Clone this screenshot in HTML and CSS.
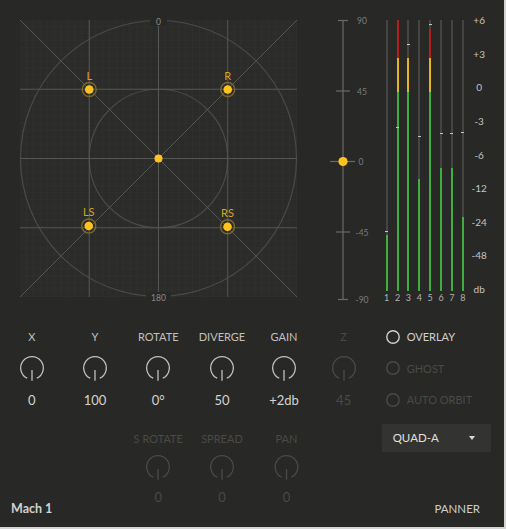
FILE: index.html
```html
<!DOCTYPE html>
<html>
<head>
<meta charset="utf-8">
<link rel="stylesheet" href="styles.css">
</head>
<body>
<div class="panel">
  <div class="top">
    <svg class="panner" width="277" height="277" viewBox="0 0 277 277">
      <defs>
        <pattern id="minor" width="6.925" height="6.925" patternUnits="userSpaceOnUse">
          <path d="M6.925 0V6.925H0" fill="none" stroke="#323230" stroke-width="1"/>
        </pattern>
      </defs>
      <rect width="277" height="277" fill="#2b2b29"/>
      <rect width="277" height="277" fill="url(#minor)"/>
      <g fill="none" stroke="#4a4a48" stroke-width="1.2">
        <circle cx="138.5" cy="138.5" r="138"/>
        <circle cx="138.5" cy="138.5" r="69.25"/>
      </g>
      <g stroke="#555553" stroke-width="1">
        <line x1="0" y1="69.25" x2="277" y2="69.25"/>
        <line x1="0" y1="138.5" x2="277" y2="138.5"/>
        <line x1="0" y1="207.75" x2="277" y2="207.75"/>
        <line x1="69.25" y1="0" x2="69.25" y2="277"/>
        <line x1="138.5" y1="0" x2="138.5" y2="277"/>
        <line x1="207.75" y1="0" x2="207.75" y2="277"/>
        <line x1="0" y1="0" x2="277" y2="277"/>
        <line x1="277" y1="0" x2="0" y2="277"/>
      </g>
      <rect x="130" y="-4" width="17" height="10" fill="#282826"/>
      <text class="deg" x="138.5" y="4.5">0</text>
      <rect x="126" y="272" width="25" height="10" fill="#282826"/>
      <text class="deg" x="138.5" y="280.5">180</text>
      <g class="spk">
        <text x="69.25" y="59.5">L</text>
        <circle class="ring" cx="69.25" cy="69.5" r="7"/>
        <circle class="dot" cx="69.25" cy="69.5" r="4.3"/>
        <text x="207.75" y="59.5">R</text>
        <circle class="ring" cx="207.75" cy="69.5" r="7"/>
        <circle class="dot" cx="207.75" cy="69.5" r="4.3"/>
        <text x="68.75" y="195.5">LS</text>
        <circle class="ring" cx="68.75" cy="206" r="7"/>
        <circle class="dot" cx="68.75" cy="206" r="4.3"/>
        <text x="207.5" y="197">RS</text>
        <circle class="ring" cx="207.5" cy="206.7" r="7"/>
        <circle class="dot" cx="207.5" cy="206.7" r="4.3"/>
        <circle class="dot" cx="138.5" cy="138.5" r="4"/>
      </g>
    </svg>

    <svg class="slider" width="44" height="280" viewBox="0 0 44 280">
      <g stroke="#6a6a68" stroke-width="1.2">
        <line x1="15" y1="0" x2="15" y2="279.5"/>
        <line x1="10" y1="0.5" x2="20" y2="0.5"/>
        <line x1="8" y1="71" x2="22" y2="71"/>
        <line x1="2" y1="141.5" x2="27" y2="141.5"/>
        <line x1="8" y1="212" x2="22" y2="212"/>
        <line x1="10" y1="279.5" x2="20" y2="279.5"/>
      </g>
      <circle cx="15" cy="141.5" r="4.6" fill="#ffc21f"/>
      <g class="sl">
        <text x="34" y="3.5">90</text>
        <text x="34" y="74.5">45</text>
        <text x="33" y="145">0</text>
        <text x="34" y="215.5">-45</text>
        <text x="34" y="282.5">-90</text>
      </g>
    </svg>

    <div class="meters">
      <div class="meter"><div class="bar"><div class="fill" style="height:56px"></div><i class="peak" style="top:211px"></i></div><span>1</span></div>
      <div class="meter"><div class="bar"><div class="fill" style="height:271px"></div><i class="peak" style="top:107px"></i></div><span>2</span></div>
      <div class="meter"><div class="bar"><div class="fill" style="height:233px"></div><i class="peak" style="top:24px"></i></div><span>3</span></div>
      <div class="meter"><div class="bar"><div class="fill" style="height:112px"></div><i class="peak" style="top:116px"></i></div><span>4</span></div>
      <div class="meter"><div class="bar"><div class="fill" style="height:262px"></div><i class="peak" style="top:4px"></i></div><span>5</span></div>
      <div class="meter"><div class="bar"><div class="fill" style="height:123px"></div><i class="peak" style="top:113px"></i></div><span>6</span></div>
      <div class="meter"><div class="bar"><div class="fill" style="height:123px"></div><i class="peak" style="top:113px"></i></div><span>7</span></div>
      <div class="meter"><div class="bar"><div class="fill" style="height:74px"></div><i class="peak" style="top:112px"></i></div><span>8</span></div>
    </div>
    <div class="scale">
      <span>+6</span><span>+3</span><span>0</span><span>-3</span><span>-6</span><span>-12</span><span>-24</span><span>-48</span><span>db</span>
    </div>
  </div>

  <div class="controls">
    <div class="knobs">
      <div class="knob"><span class="label">X</span><svg width="26" height="26" viewBox="0 0 26 26"><path d="M8.2 23.2A11.3 11.3 0 1 1 17.8 23.2"/><line x1="13" y1="15" x2="13" y2="25.7"/></svg><span class="value">0</span></div>
      <div class="knob"><span class="label">Y</span><svg width="26" height="26" viewBox="0 0 26 26"><path d="M8.2 23.2A11.3 11.3 0 1 1 17.8 23.2"/><line x1="13" y1="15" x2="13" y2="25.7"/></svg><span class="value">100</span></div>
      <div class="knob"><span class="label">ROTATE</span><svg width="26" height="26" viewBox="0 0 26 26"><path d="M8.2 23.2A11.3 11.3 0 1 1 17.8 23.2"/><line x1="13" y1="15" x2="13" y2="25.7"/></svg><span class="value">0°</span></div>
      <div class="knob"><span class="label">DIVERGE</span><svg width="26" height="26" viewBox="0 0 26 26"><path d="M8.2 23.2A11.3 11.3 0 1 1 17.8 23.2"/><line x1="13" y1="15" x2="13" y2="25.7"/></svg><span class="value">50</span></div>
      <div class="knob"><span class="label">GAIN</span><svg width="26" height="26" viewBox="0 0 26 26"><path d="M8.2 23.2A11.3 11.3 0 1 1 17.8 23.2"/><line x1="13" y1="15" x2="13" y2="25.7"/></svg><span class="value">+2db</span></div>
      <div class="knob off"><span class="label">Z</span><svg width="26" height="26" viewBox="0 0 26 26"><path d="M8.2 23.2A11.3 11.3 0 1 1 17.8 23.2"/><line x1="13" y1="15" x2="13" y2="25.7"/></svg><span class="value">45</span></div>

      <div class="knob off row2 start3"><span class="label">S ROTATE</span><svg width="26" height="26" viewBox="0 0 26 26"><path d="M8.2 23.2A11.3 11.3 0 1 1 17.8 23.2"/><line x1="13" y1="15" x2="13" y2="25.7"/></svg><span class="value">0</span></div>
      <div class="knob off row2"><span class="label">SPREAD</span><svg width="26" height="26" viewBox="0 0 26 26"><path d="M8.2 23.2A11.3 11.3 0 1 1 17.8 23.2"/><line x1="13" y1="15" x2="13" y2="25.7"/></svg><span class="value">0</span></div>
      <div class="knob off row2 pan"><span class="label">PAN</span><svg width="26" height="26" viewBox="0 0 26 26"><path d="M8.2 23.2A11.3 11.3 0 1 1 17.8 23.2"/><line x1="13" y1="15" x2="13" y2="25.7"/></svg><span class="value">0</span></div>
    </div>

    <div class="options">
      <div class="option"><svg width="14" height="14" viewBox="0 0 14 14"><circle cx="7" cy="7" r="6.2"/></svg><span>OVERLAY</span></div>
      <div class="option off"><svg width="14" height="14" viewBox="0 0 14 14"><circle cx="7" cy="7" r="6.2"/></svg><span>GHOST</span></div>
      <div class="option off"><svg width="14" height="14" viewBox="0 0 14 14"><circle cx="7" cy="7" r="6.2"/></svg><span>AUTO ORBIT</span></div>
      <div class="dropdown"><span>QUAD-A</span><i class="caret"></i></div>
    </div>
  </div>

  <div class="footer">
    <span class="brand">Mach 1</span>
    <span class="mode">PANNER</span>
  </div>
</div>
</body>
</html>
```

FILE: styles.css
```css
* { box-sizing: border-box; }
html, body { margin: 0; padding: 0; }
body {
  background: #d4d4d4;
  font-family: Lato, "Open Sans", "Liberation Sans", sans-serif;
  width: 506px;
  height: 529px;
}
.panel {
  width: 504px;
  height: 527px;
  background: #282826;
  display: flex;
  flex-direction: column;
  overflow: hidden;
}

/* top row */
.top {
  display: flex;
  align-items: flex-start;
  height: 306px;
  flex: none;
  padding: 20px 0 0 20px;
}
.panner { display: block; overflow: visible; flex: none; }
.panner .deg {
  font-size: 8.5px;
  fill: #8a8a88;
  text-anchor: middle;
}
.spk text {
  font-size: 11px;
  fill: #d6a526;
  text-anchor: middle;
}
.spk .ring { fill: none; stroke: #7c6730; stroke-width: 1.4; }
.spk .dot { fill: #ffc21f; }

.slider { display: block; overflow: visible; flex: none; margin-left: 31px; }
.sl text {
  font-size: 8.5px;
  fill: #7c7c7a;
  text-anchor: middle;
}

.meters {
  display: grid;
  grid-template-columns: repeat(8, 10.86px);
  margin-left: 9.3px;
  flex: none;
}
.meter {
  display: flex;
  flex-direction: column;
  align-items: center;
}
.bar {
  position: relative;
  width: 2px;
  height: 271px;
  background: #454543;
}
.fill {
  position: absolute;
  left: 0;
  right: 0;
  bottom: 0;
  background: linear-gradient(to top, #3fae3c 0 199px, #e6b41e 199px 233px, #b11f1f 233px);
}
.peak {
  position: absolute;
  left: -0.5px;
  width: 3px;
  height: 1px;
  background: #c8c8c8;
}
.meter span {
  font-size: 9px;
  line-height: 10px;
  margin-top: 2px;
  color: #b2b2b0;
}
.scale {
  display: flex;
  flex-direction: column;
  justify-content: space-between;
  align-items: center;
  width: 22px;
  height: 281px;
  margin-top: -6px;
  font-size: 10px;
  line-height: 12px;
  color: #c4c4c2;
  flex: none;
}

/* controls */
.controls {
  display: flex;
  height: 195px;
  flex: none;
}
.knobs {
  display: grid;
  grid-template-columns: 63.4px 63.2px 63.4px 64px 60px 59.4px;
  grid-template-rows: 78px 73px;
  row-gap: 23.5px;
  padding-top: 24px;
  align-content: start;
  flex: none;
}
.knob {
  display: flex;
  flex-direction: column;
  align-items: center;
  color: #c0c0be;
}
.knob .label {
  font-size: 11px;
  line-height: 14px;
  white-space: nowrap;
}
.knob svg {
  display: block;
  margin-top: 11px;
  fill: none;
  stroke: currentColor;
  stroke-width: 1.3;
}
.knob .value {
  font-size: 13px;
  line-height: 16px;
  margin-top: 11px;
  color: #d4d4d2;
}
.knob.off, .knob.off .value { color: #4a4a48; }
.row2 svg { margin-top: 8px; }
.row2 .value { margin-top: 9px; }
.start3 { grid-column-start: 3; }
.pan { transform: translateX(2.5px); }

.options {
  margin-left: 8.3px;
  padding-top: 14.9px;
  flex: none;
  width: 110px;
}
.option {
  display: flex;
  align-items: center;
  gap: 7px;
  height: 31.6px;
  padding-left: 4px;
  font-size: 11px;
  color: #d0d0ce;
}
.option svg { display: block; fill: none; stroke: currentColor; stroke-width: 1.4; }
.option.off { color: #4a4a48; }
.dropdown {
  margin-top: 8.2px;
  width: 109.3px;
  height: 28px;
  background: #333331;
  display: flex;
  align-items: center;
  justify-content: space-between;
  padding: 0 15.5px 0 11px;
  font-size: 11.5px;
  color: #e0e0de;
}
.caret {
  width: 0;
  height: 0;
  border-left: 3.7px solid transparent;
  border-right: 3.7px solid transparent;
  border-top: 4px solid #d8d8d6;
}

/* footer */
.footer {
  display: flex;
  justify-content: space-between;
  align-items: center;
  padding: 0 24px 9.5px 11px;
  line-height: 16px;
  flex: none;
}
.brand { font-size: 12.5px; font-weight: 700; color: #d2d2d0; }
.mode { font-size: 11.5px; color: #cfcfcd; }
```
